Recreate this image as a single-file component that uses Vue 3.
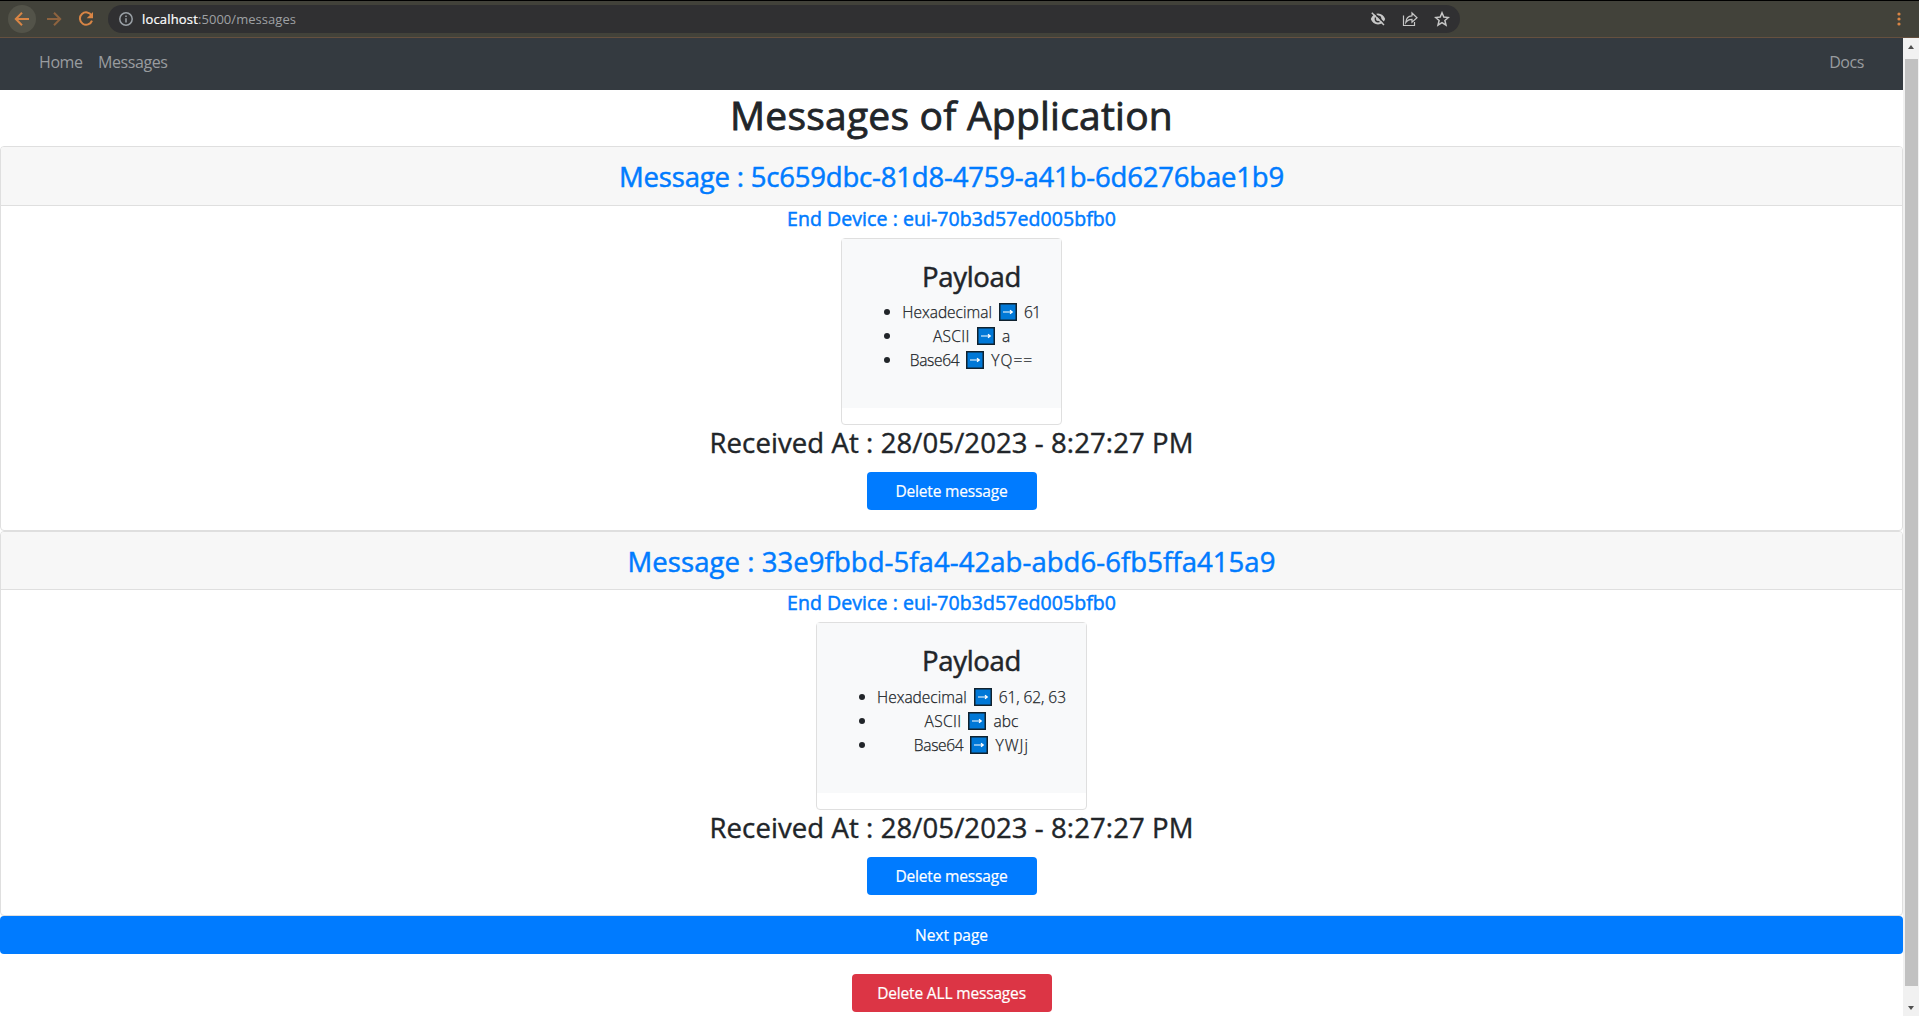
<script setup>
const messages = [
  {
    id: '5c659dbc-81d8-4759-a41b-6d6276bae1b9',
    tracking: -0.186,
    rows: [
      { label: 'Hexadecimal', value: '61', tracking: -0.45 },
      { label: 'ASCII', value: 'a', tracking: 0 },
      { label: 'Base64', value: 'YQ==', tracking: 1.066 },
    ],
  },
  {
    id: '33e9fbbd-5fa4-42ab-abd6-6fb5ffa415a9',
    tracking: 0.066,
    rows: [
      { label: 'Hexadecimal', value: '61, 62, 63', tracking: -0.05 },
      { label: 'ASCII', value: 'abc', tracking: 0.063 },
      { label: 'Base64', value: 'YWJj', tracking: 1.1 },
    ],
  },
]
</script>

<template>
  <div class="window">
    <header class="toolbar">
      <span class="round"><svg width="16" height="16" viewBox="0 0 16 16"><path d="M15 8H2.5M8 1.8 1.8 8 8 14.2" /></svg></span>
      <svg class="dim" width="16" height="16" viewBox="0 0 16 16"><path d="M1 8h12.5M8 1.8 14.2 8 8 14.2" /></svg>
      <svg class="reload" width="16" height="16" viewBox="0 0 16 16"><path d="M13.6 4.6A6.2 6.2 0 1 0 14 9.6" /><path class="fill" d="M15 1v6.3H8.7z" /></svg>
      <div class="omnibox">
        <svg class="info" width="14" height="14" viewBox="0 0 14 14"><circle cx="7" cy="7" r="6.2" /><path d="M7 6.2v4.3M7 3.4v1.5" /></svg>
        <span class="url"><b>localhost</b><span>:5000/messages</span></span>
        <svg class="act" width="16" height="16" viewBox="0 0 16 16"><path class="fill" fill-rule="evenodd" d="M8 2.5c3.3 0 6 2.2 7.2 5.5-1.2 3.3-3.9 5.5-7.2 5.5S2 11.3.8 8C2 4.700 4.700 2.500 8 2.500zM8 4.600a3.400 3.400 0 1 0 0 6.800 3.400 3.400 0 0 0 0-6.800zM8 6a2 2 0 1 1 0 4 2 2 0 0 1 0-4z" /><path class="cut" d="M3 .8 15.300 13.100" /><path d="M1.800 1.800 14 14" /></svg>
        <svg class="act" width="16" height="16" viewBox="0 0 16 16"><path class="thin" d="M1.500 4.500V14.500H12.500V11M3.800 11.500C4 7.500 6 5 10 4.800V2l5 4.700-5 4.500V8.300C7 8.300 5.200 9.300 3.800 11.500z" /></svg>
        <svg class="act" width="16" height="16" viewBox="0 0 16 16"><path d="m8 1.800 1.800 4.300 4.600.4-3.500 3 1.100 4.600-4-2.500-4 2.500 1.100-4.600-3.500-3 4.600-.4z" /></svg>
      </div>
      <svg class="kebab" width="4" height="14" viewBox="0 0 4 14"><circle cx="2" cy="2" r="1.6" /><circle cx="2" cy="7" r="1.6" /><circle cx="2" cy="12" r="1.6" /></svg>
    </header>
    <div class="viewport">
      <main>
        <nav><a>Home</a><a>Messages</a><a class="docs">Docs</a></nav>
        <h1>Messages of Application</h1>
        <article v-for="m in messages" :key="m.id" class="card">
          <h2 :style="{ letterSpacing: m.tracking + 'px' }">Message : {{ m.id }}</h2>
          <h3>End Device : eui-70b3d57ed005bfb0</h3>
          <section class="payload">
            <div class="body">
              <h4>Payload</h4>
              <ul>
                <li v-for="r in m.rows" :key="r.label">
                  <span :class="r.label.toLowerCase()">{{ r.label }}</span>
                  <svg width="18" height="18" viewBox="0 0 18 18"><path class="box" d="M.75.75h16.500v16.500H.75z" /><path class="arrow" d="M4 9h9M11 7.200 13.300 9 11 10.800" /></svg>
                  <span :style="{ letterSpacing: r.tracking + 'px' }">{{ r.value }}</span>
                </li>
              </ul>
            </div>
          </section>
          <p class="received">Received At : 28/05/2023 - 8:27:27 PM</p>
          <button class="btn">Delete message</button>
        </article>
        <button class="btn next">Next page</button>
        <button class="btn danger">Delete ALL messages</button>
      </main>
      <aside class="scrollbar"><i class="up"></i><div class="thumb"></div><i class="down"></i></aside>
    </div>
  </div>
</template>

<style>
body { margin: 0; overflow: hidden; }
</style>
<style scoped>
* { box-sizing: border-box; }
.window { width: 1919px; height: 1016px; display: flex; flex-direction: column; font-family: "Open Sans", sans-serif; color: #212529; background: #fff; overflow: hidden; }
span, a, b { white-space: pre; }
svg { flex: none; fill: none; stroke: #c7c7c7; stroke-width: 1.5; }
.fill { fill: #c7c7c7; stroke: none; }
.toolbar { flex: none; height: 38px; display: flex; align-items: center; background: #42423a; border-top: 1px solid #000; border-bottom: 1px solid #65503f; padding: 0 18px 0 8px; }
.round { width: 28px; height: 28px; border-radius: 50%; background: #535349; display: flex; align-items: center; justify-content: center; margin-right: 10px; }
.round svg, .dim, .reload { stroke: #d98545; stroke-width: 2; }
.dim { opacity: .5; margin-right: 16px; }
.reload { margin-right: 14px; }
.reload .fill { fill: #d98545; }
.omnibox { width: 1352px; height: 28px; border-radius: 14px; background: #303032; display: flex; align-items: center; padding: 0 10px 0 11px; gap: 16px; }
.info { margin-right: -7px; stroke: #9aa0a6; }
.url { flex: 1; font-size: 13px; letter-spacing: .04px; color: #9fa1a4; }
.url b { color: #fff; font-weight: 400; letter-spacing: .17px; -webkit-text-stroke: .2px; }
.cut { stroke: #303032; }
.thin { stroke-width: 1.2; }
.kebab { margin-left: auto; }
.kebab circle { fill: #d98545; stroke: none; }
.viewport { flex: 1; min-height: 0; display: flex; }
main { width: 1903px; display: flex; flex-direction: column; align-items: center; }
nav { width: 100%; height: 52px; background: #343a40; display: flex; gap: 15.5px; padding: 0 39px; font-size: 16px; line-height: 49px; letter-spacing: -.42px; color: #999c9f; }
.docs { margin-left: auto; }
h1, h2, h3, h4, p, ul { margin: 0; padding: 0; font-weight: 400; white-space: pre; }
h1, h2, h3, h4 { -webkit-text-stroke: .5px; }
h1 { height: 56px; font-size: 39px; line-height: 50px; letter-spacing: .223px; -webkit-text-stroke-width: .8px; }
.card { width: 100%; height: 385px; flex: none; border: 1px solid #dfdfdf; border-radius: 4px; display: flex; flex-direction: column; align-items: center; }
h2 { width: 100%; height: 59px; flex: none; background: #f7f7f7; border-bottom: 1px solid #dfdfdf; border-radius: 3px 3px 0 0; text-align: center; font-size: 27.5px; line-height: 60px; color: #007bff; }
h3 { height: 32px; flex: none; font-size: 19.5px; line-height: 26px; letter-spacing: .069px; color: #007bff; }
.payload { flex: none; border: 1px solid #dfdfdf; border-radius: 4px; padding-bottom: 16px; }
.body { height: 169px; background: #f8f9fa; padding: 20px 20px 0 60px; text-align: center; }
h4 { height: 41px; font-size: 27.5px; line-height: 36px; letter-spacing: -.315px; }
.card + .card h2 { height: 58px; }
.card + .card .body { height: 170px; }
.card + .card h4 { height: 42px; }
.payload + .received { margin-top: 0; }
li { position: relative; display: flex; justify-content: center; align-items: center; gap: 7px; height: 24px; font-size: 15.5px; font-weight: 300; -webkit-text-stroke: .25px; }
li::before { content: ""; position: absolute; left: -18px; top: 9px; width: 6px; height: 6px; border-radius: 50%; background: #212529; }
.ascii { letter-spacing: .359px; }
.base64 { letter-spacing: -.3px; }
.box { fill: #0078d7; stroke: #10222f; }
.arrow { stroke: #fff; stroke-width: 1.2; }
.received { height: 47px; font-size: 27.5px; line-height: 36px; letter-spacing: .097px; -webkit-text-stroke: .4px; }
.btn { flex: none; width: 170px; height: 38px; border: 0; border-radius: 4px; background: #007bff; color: #fff; font: 400 15.5px/38px "Open Sans", sans-serif; letter-spacing: -.16px; -webkit-text-stroke: .2px; padding: 0; }
.btn.next { width: 100%; letter-spacing: -.03px; }
.btn.danger { width: 200px; margin-top: 20px; background: #dc3545; }
.scrollbar { width: 16px; background: #f1f1f1; display: flex; flex-direction: column; align-items: center; }
.up, .down { border: 3.5px solid transparent; width: 0; height: 0; }
.up { border-top: 0; border-bottom: 4px solid #505050; margin: 7px 0 10px; }
.down { border-bottom: 0; border-top: 4px solid #505050; margin-top: 20px; }
.thumb { width: 13px; height: 927px; background: #c1c1c1; }
</style>
